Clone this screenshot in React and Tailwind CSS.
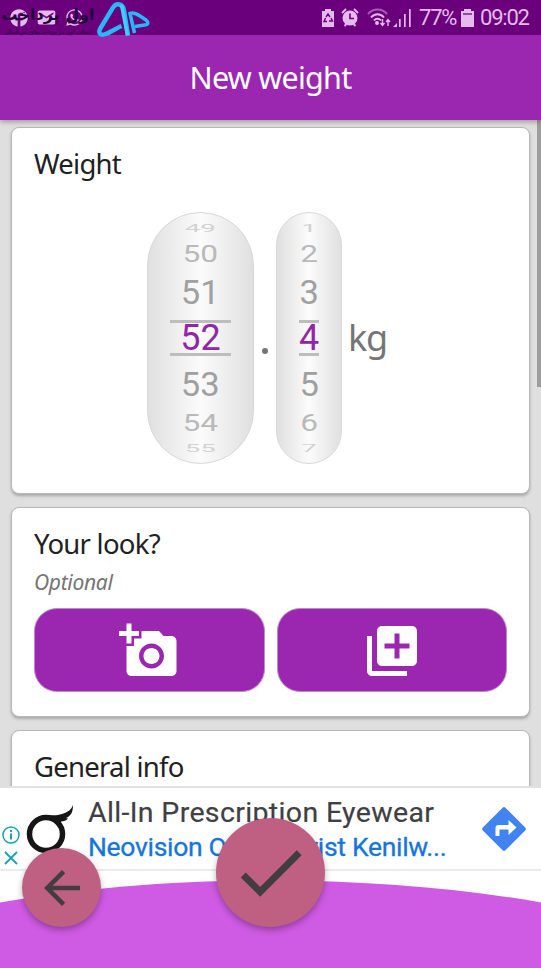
import { MdAddAPhoto, MdLibraryAdd, MdArrowBack, MdCheck, MdEmail } from "react-icons/md";
import { FaFacebook, FaWhatsapp } from "react-icons/fa";

// each row of the wheel gets flatter towards the ends
const ROWS = [
  { row: "h-[18px]", text: "translate-y-px scale-x-[0.77] scale-y-[0.29] text-[#d2d2d2]" },
  { row: "h-[32px]", text: "translate-y-px scale-x-[0.88] scale-y-[0.64] text-[#b9b9b9]" },
  { row: "h-[46px]", text: "translate-y-px scale-x-[0.96] scale-y-[0.92] text-[#a0a0a0]" },
  { row: "h-[46px]", text: "text-[#9127a6]" },
  { row: "h-[46px]", text: "translate-y-px scale-x-[0.96] scale-y-[0.92] text-[#a0a0a0]" },
  { row: "h-[32px]", text: "scale-x-[0.88] scale-y-[0.64] text-[#b9b9b9]" },
  { row: "h-[18px]", text: "translate-y-px scale-x-[0.77] scale-y-[0.29] text-[#d2d2d2]" },
];

const Wheel = ({ values, className, lineClass }) => (
  <div
    className={`flex h-[252px] flex-col items-center justify-center rounded-full border border-[#d8d8d8] bg-linear-to-r from-[#e0e0e0] via-[#fbfbfb] to-[#e0e0e0] font-[Roboto,sans-serif] text-[36px] leading-none ${className}`}
  >
    {values.map((value, i) => (
      <div key={value} className={`flex shrink-0 items-center justify-center ${ROWS[i].row}`}>
        {i === 3 ? (
          <div className={`flex h-9 items-center justify-center border-y-[3px] border-[#bdbdbd] ${lineClass}`}>
            <span className={ROWS[i].text}>{value}</span>
          </div>
        ) : (
          <span className={ROWS[i].text}>{value}</span>
        )}
      </div>
    ))}
  </div>
);

const Card = ({ title, className, children }) => (
  <section
    className={`mx-[11px] shrink-0 rounded-lg border border-[#b8b8b8] bg-white px-[22px] pt-[17px] shadow-[0_2px_3px_#a8a8a8] ${className}`}
  >
    <h2 className="text-[27.5px] leading-[38px] tracking-[-0.75px] text-[#212121]">{title}</h2>
    {children}
  </section>
);

const StatusBar = () => (
  <div className="relative z-20 flex h-[35px] shrink-0 items-center justify-between bg-[#6a007c] text-[#e6b9ef]">
    <div className="flex items-center gap-[8px] pl-[10px]">
      <FaFacebook className="size-[18px]" />
      <MdEmail className="size-[21px]" />
      <FaWhatsapp className="size-[19px]" />
    </div>
    <div className="flex items-center pr-[11px] font-[Roboto,sans-serif] text-[22px] leading-none">
      <svg width="12" height="18" viewBox="0 0 12 18" className="mr-[7px]">
        <path d="M3 0h6v2h3v16H0V2h3z" fill="currentColor" />
        <path d="M4 8l2-3 2 3M9 9l1.5 3H7M5 12.5H2L3.5 9" fill="none" stroke="#6a007c" strokeWidth="1.4" />
      </svg>
      <svg width="18" height="19" viewBox="0 0 18 19" className="mr-[8px]">
        <circle cx="9" cy="10" r="7.5" fill="currentColor" />
        <path d="M1 5l4-4M17 5l-4-4M3.500 18l2-2M14.500 18l-2-2" stroke="currentColor" strokeWidth="1.800" />
        <path d="M9 5.500V10.500h4" fill="none" stroke="#6a007c" strokeWidth="1.600" />
      </svg>
      <svg width="26" height="20" viewBox="0 0 26 20" fill="none" stroke="currentColor" strokeWidth="2">
        <path d="M1 6C6 0 15 0 20 6" opacity=".5" />
        <path d="M4 9.500C7.500 5 13.500 5 17 9.500M7 12.500c2-2.500 5-2.500 7 0" />
        <circle cx="10" cy="15" r="1" fill="currentColor" />
        <path d="M15.500 11v6M13.500 15l2 2.500 2-2.500M21 18v-6M19 14l2-2.500 2 2.500" strokeWidth="1.400" />
      </svg>
      <svg width="20" height="19" viewBox="0 0 20 19" fill="currentColor" className="mr-[6px]">
        <path d="M0 19l4-4v4zM6 11h1.700v8H6zM11 6h1.700v13H11zM16 1h1.700v18H16z" />
      </svg>
      <span className="w-[36px] tracking-[-1.2px]">77%</span>
      <svg width="13" height="18" viewBox="0 0 13 18" className="mx-[6px]">
        <path d="M3 0h7v2h3v16H0V2h3z" fill="currentColor" />
        <path d="M2 5h9" stroke="#8d4c9a" strokeWidth="2" />
      </svg>
      <span className="w-[50px] tracking-[-1.2px]">09:02</span>
    </div>

    {/* watermark */}
    <div dir="rtl" className="absolute left-0 top-0 flex h-[38px] w-[96px] flex-col items-center whitespace-nowrap text-[#24063a]">
      <p className="mt-[1px] font-['DejaVu_Sans',sans-serif] text-[16px] font-bold leading-[27px]">اول پرداخت</p>
      <p className="font-['DejaVu_Sans',sans-serif] text-[5.8px] leading-[9px]">انتخاب اول در پرداخت‌های بین‌المللی</p>
    </div>
    <svg width="54" height="38" viewBox="0 0 54 38" fill="none" className="absolute left-[97px] top-0">
      <path
        d="M31 35.500L27 10.500C26 4 20 2 16 7.500L3.500 28C1 33 3 36 8.500 34C14 32 19 28.500 24.500 26"
        stroke="#27b9f5"
        strokeWidth="4.500"
      />
      <path d="M30.500 35.500L24.500 5" stroke="#42cdfb" strokeWidth="3.500" />
      <path
        d="M37.500 33L33 13.500C36 12 40 14 43 16L49 20C52 22.500 51 25 47.500 25L38 26.500"
        stroke="#27b9f5"
        strokeWidth="3.500"
      />
    </svg>
  </div>
);

const AdBanner = () => (
  <div className="flex h-[85px] shrink-0 border-y-2 border-t-[#e0e0e0] border-b-[#ebebeb] bg-white">
    <div className="flex w-[22px] flex-col items-center gap-[7px] pt-[38px]">
      <svg width="18" height="18" viewBox="0 0 18 18" fill="none" stroke="#16a2ae" className="shrink-0">
        <circle cx="9" cy="9" r="8" strokeWidth="1.500" />
        <path d="M9 4v2M9 7.500v6" strokeWidth="2" />
      </svg>
      <svg width="14" height="14" viewBox="0 0 14 14" stroke="#16a2ae" strokeWidth="1.800" className="shrink-0">
        <path d="M1 1l12 12M13 1L1 13" />
      </svg>
    </div>
    <svg width="52" height="56" viewBox="0 0 52 56" className="mt-[14px] shrink-0">
      <circle cx="24" cy="32" r="16.500" fill="none" stroke="#161616" strokeWidth="5.500" />
      <path d="M22 13C30 13 34 14 40 12C46 10 49 8 51 3C51 10 49 14 44 16L46 16.500C44 19 42 19 39 19.500L37 26L30 18z" fill="#161616" />
    </svg>
    <div className="flex-1 whitespace-nowrap pl-[14px] pt-[7px] font-[Roboto,sans-serif]">
      <p className="text-[28.5px] leading-[35px] tracking-[0.35px] text-[#3f4043] [-webkit-text-stroke:0.2px_#3f4043]">
        All-In Prescription Eyewear
      </p>
      <p className="text-[26.500px] leading-[33px] tracking-[-0.3px] text-[#1575dc] [-webkit-text-stroke:0.3px_#1575dc]">
        Neovision Optometrist Kenilw...
      </p>
    </div>
    <svg width="46" height="46" viewBox="0 0 46 46" className="mr-[14px] mt-[18px] shrink-0">
      <rect x="7" y="7" width="32" height="32" rx="2" fill="#4283f2" transform="rotate(45 23 23)" />
      <path d="M14.500 30v-8c0-2 1-3 3-3h10v-5l8 7.500-8 7.500v-5.500h-9V30z" fill="white" />
    </svg>
  </div>
);

export default function App() {
  return (
    <div className="relative flex h-[968px] w-[541px] flex-col overflow-hidden bg-white font-['Noto_Sans',sans-serif]">
      <StatusBar />
      <header className="z-10 flex h-[85px] shrink-0 items-center justify-center bg-[#9b27b0] shadow-[0_2px_5px_rgba(0,0,0,0.3)]">
        <h1 className="text-[30.5px] tracking-[-0.75px] text-white">New weight</h1>
      </header>

      <main className="relative flex h-[666px] shrink-0 flex-col gap-[13px] overflow-hidden bg-[#dfdfdf] pt-[7px]">
        <Card title="Weight" className="h-[367px]">
          <div className="mt-[29px] flex items-center pl-[113px]">
            <Wheel values={[49, 50, 51, 52, 53, 54, 55]} className="w-[107px]" lineClass="w-[61px]" />
            <span className="mx-[8px] mt-[26px] size-[6px] rounded-full bg-[#757575]" />
            <Wheel values={[1, 2, 3, 4, 5, 6, 7]} className="w-[66px]" lineClass="w-[20px]" />
            <span className="ml-[6px] text-[36px] leading-none tracking-[-1.2px] text-[#757575]">kg</span>
          </div>
        </Card>

        <Card title="Your look?" className="h-[210px]">
          <p className="text-[21px] italic leading-[38px] tracking-[-0.3px] text-[#757575]">Optional</p>
          <div className="mt-[7px] flex gap-[12px]">
            <button className="flex h-[84px] flex-1 items-center justify-center rounded-[23px] border border-[#bf8ac9] bg-[#9b27b0] text-white">
              <MdAddAPhoto className="mt-px size-[60px]" />
            </button>
            <button className="flex h-[84px] flex-1 items-center justify-center rounded-[23px] border border-[#bf8ac9] bg-[#9b27b0] text-white">
              <MdLibraryAdd className="mt-px size-[60px]" />
            </button>
          </div>
        </Card>

        <Card title="General info" className="h-[200px]" />
        <div className="absolute right-0 top-0 h-[267px] w-[4px] bg-[#9d9d9d]" />
      </main>

      <AdBanner />

      <footer className="relative flex-1">
        <svg width="541" height="97" viewBox="0 0 541 97" className="block">
          <path d="M0 31.500C165 2 376 2 541 31.500V97H0z" fill="#cf5ae3" />
        </svg>
        <button className="absolute left-[22px] top-[-23px] flex size-[79px] items-center justify-center rounded-full bg-[#bf6082] text-[#433c40] shadow-[0_3px_6px_rgba(0,0,0,0.3)]">
          <MdArrowBack className="size-[54px]" />
        </button>
        <button className="absolute left-[216px] top-[-53px] flex size-[109px] items-center justify-center rounded-full bg-[#bf6082] text-[#433c40] shadow-[0_3px_6px_rgba(0,0,0,0.3)]">
          <MdCheck className="size-[83px]" />
        </button>
      </footer>
    </div>
  );
}
